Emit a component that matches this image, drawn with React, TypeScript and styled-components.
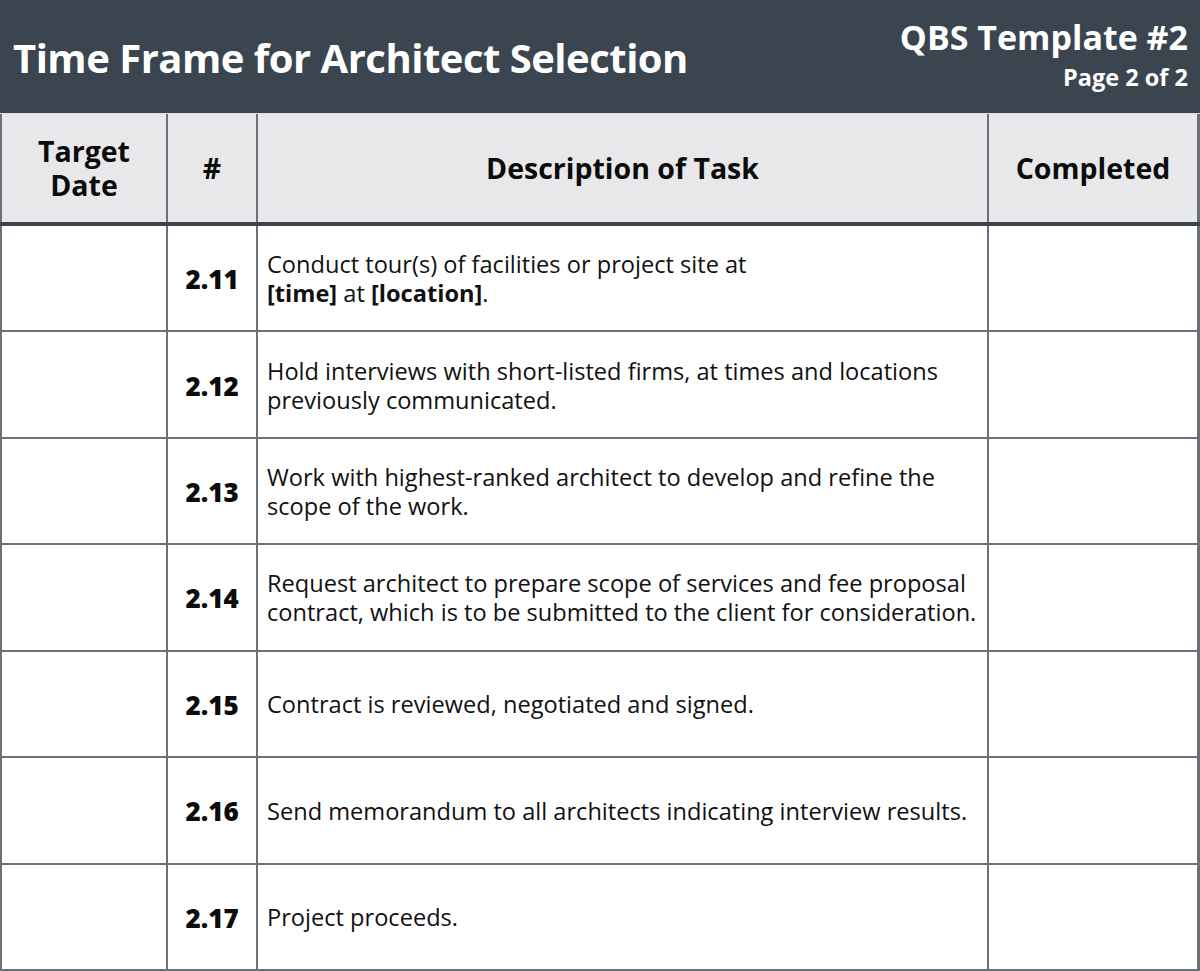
import React from "react";
import styled, { createGlobalStyle } from "styled-components";

const GlobalStyle = createGlobalStyle`
  html, body { margin: 0; padding: 0; background: #ffffff; }
  body { font-family: "Open Sans", "Liberation Sans", sans-serif; }
`;

const LINE = "#6b7179";
const DARK = "#3b4550";

const Page = styled.div`
  width: 1200px;
  height: 971px;
  overflow: hidden;
  background: #ffffff;
`;

const TitleBar = styled.header`
  height: 113px;
  background: ${DARK};
  display: flex;
  align-items: stretch;
  justify-content: space-between;
  padding: 0 12px 0 13px;
  box-sizing: border-box;
`;

const Title = styled.h1`
  margin: 0;
  align-self: center;
  margin-top: 2px;
  color: #ffffff;
  font-size: 40px;
  font-weight: 700;
  letter-spacing: -0.5px;
  white-space: nowrap;
`;

const TitleSide = styled.div`
  display: flex;
  flex-direction: column;
  align-items: flex-end;
  padding-top: 14px;
  color: #ffffff;
  font-weight: 700;
  white-space: nowrap;
`;

const TemplateName = styled.div`
  font-size: 34px;
  line-height: 46px;
`;

const PageNo = styled.div`
  font-size: 23.5px;
  line-height: 34px;
`;

const Columns = `164px 88px 729px 208px`;

const HeadRow = styled.div`
  display: grid;
  grid-template-columns: ${Columns};
  column-gap: 2px;
  background: ${LINE};
  padding: 0 3px 0 2px;
  border-top: 1px solid #d9dadd;
  border-bottom: 4px solid ${DARK};
`;

const HeadCell = styled.div`
  height: 108px;
  background: #e8e8ea;
  display: flex;
  align-items: center;
  justify-content: center;
  text-align: center;
  font-size: 28.5px;
  font-weight: 700;
  line-height: 34px;
  color: #0c0c0c;
  white-space: nowrap;
`;

const Body = styled.div`
  display: grid;
  grid-template-columns: ${Columns};
  grid-auto-rows: 1fr;
  gap: 2px;
  height: 745px;
  box-sizing: border-box;
  background: ${LINE};
  padding: 0 3px 2px 2px;
`;

const Cell = styled.div`
  background: #ffffff;
  display: flex;
  align-items: center;
`;

const NumCell = styled(Cell)`
  justify-content: center;
  font-size: 26px;
  font-weight: 800;
  color: #0c0c0c;
  padding-top: 2px;
`;

const DescCell = styled(Cell)`
  padding: 2px 0 0 9px;
  font-size: 23.6px;
  line-height: 29px;
  color: #111111;
  white-space: nowrap;
  overflow: hidden;
`;

const Strong = styled.b`
  font-weight: 700;
`;

const rows: { n: string; d: React.ReactNode }[] = [
  {
    n: "2.11",
    d: (
      <span>
        Conduct tour(s) of facilities or project site at
        <br />
        <Strong>[time]</Strong> at <Strong>[location]</Strong>.
      </span>
    ),
  },
  {
    n: "2.12",
    d: (
      <span>
        Hold interviews with short-listed firms, at times and locations
        <br />
        previously communicated.
      </span>
    ),
  },
  {
    n: "2.13",
    d: (
      <span>
        Work with highest-ranked architect to develop and refine the
        <br />
        scope of the work.
      </span>
    ),
  },
  {
    n: "2.14",
    d: (
      <span>
        Request architect to prepare scope of services and fee proposal
        <br />
        contract, which is to be submitted to the client for consideration.
      </span>
    ),
  },
  { n: "2.15", d: <span>Contract is reviewed, negotiated and signed.</span> },
  {
    n: "2.16",
    d: <span>Send memorandum to all architects indicating interview results.</span>,
  },
  { n: "2.17", d: <span>Project proceeds.</span> },
];

export default function App() {
  return (
    <Page>
      <GlobalStyle />
      <TitleBar>
        <Title>Time Frame for Architect Selection</Title>
        <TitleSide>
          <TemplateName>QBS Template #2</TemplateName>
          <PageNo>Page 2 of 2</PageNo>
        </TitleSide>
      </TitleBar>
      <HeadRow>
        <HeadCell>
          Target
          <br />
          Date
        </HeadCell>
        <HeadCell>#</HeadCell>
        <HeadCell>Description of Task</HeadCell>
        <HeadCell>Completed</HeadCell>
      </HeadRow>
      <Body>
        {rows.map((r) => (
          <React.Fragment key={r.n}>
            <Cell />
            <NumCell>{r.n}</NumCell>
            <DescCell>{r.d}</DescCell>
            <Cell />
          </React.Fragment>
        ))}
      </Body>
    </Page>
  );
}
